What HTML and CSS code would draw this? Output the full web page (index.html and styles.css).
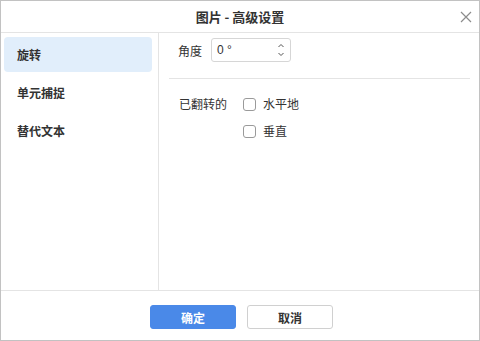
FILE: index.html
```html
<!DOCTYPE html>
<html lang="zh">
<head>
    <meta charset="UTF-8">
    <title>图片 - 高级设置</title>
    <link rel="stylesheet" href="styles.css">
</head>
<body>
    <div class="dialog">
        <div class="header">
            <span class="title">图片 - 高级设置</span>
            <svg class="close" width="12" height="12" viewBox="0 0 12 12">
                <path d="M1 1L11 11M11 1L1 11" stroke="#8c8c8c" stroke-width="1.2" fill="none"/>
            </svg>
        </div>
        <div class="main">
            <ul class="nav">
                <li class="active">旋转</li>
                <li>单元捕捉</li>
                <li>替代文本</li>
            </ul>
            <div class="pane">
                <div class="row angle">
                    <span class="label">角度</span>
                    <div class="spin">
                        <span>0 °</span>
                        <svg width="8" height="16" viewBox="0 0 8 16">
                            <path d="M1.5 5L4 2.5L6.5 5M1.5 11L4 13.5L6.5 11" stroke="#555" stroke-width="1" fill="none"/>
                        </svg>
                    </div>
                </div>
                <div class="sep"></div>
                <div class="flip">
                    <span class="label">已翻转的</span>
                    <div class="checks">
                        <label class="check"><i></i>水平地</label>
                        <label class="check"><i></i>垂直</label>
                    </div>
                </div>
            </div>
        </div>
        <div class="footer">
            <button class="btn primary">确定</button>
            <button class="btn">取消</button>
        </div>
    </div>
</body>
</html>
```

FILE: styles.css
```css
body{
    margin: 0;
    font-family: "Noto Sans CJK SC", "Noto Sans", sans-serif;
    font-size: 12px;
    color: #333;
}
.dialog{
    width: 480px;
    height: 341px;
    box-sizing: border-box;
    border: 1px solid #c2c2c2;
    display: flex;
    flex-direction: column;
    background: #fff;
}
.header{
    height: 31px;
    border-bottom: 1px solid #e4e4e4;
    display: flex;
    align-items: center;
    justify-content: center;
    position: relative;
}
.title{
    font-size: 13px;
    font-weight: bold;
    color: #333;
}
.close{
    position: absolute;
    right: 7px;
    top: 10px;
}
.main{
    flex: 1;
    display: flex;
}
.nav{
    list-style: none;
    margin: 0;
    padding: 4px 0 0 3px;
    width: 154px;
    border-right: 1px solid #e4e4e4;
}
.nav li{
    width: 148px;
    height: 35px;
    line-height: 35px;
    margin-bottom: 3px;
    padding-left: 13px;
    box-sizing: border-box;
    border-radius: 4px;
    font-weight: bold;
}
.nav li.active{
    background: #e1eefb;
}
.pane{
    flex: 1;
    padding: 5px 9px 0 10px;
}
.row{
    display: flex;
    align-items: center;
}
.angle .label{
    padding-left: 9px;
    width: 33px;
}
.spin{
    width: 80px;
    height: 24px;
    box-sizing: border-box;
    border: 1px solid #d6d6d6;
    border-radius: 3px;
    display: flex;
    align-items: center;
    justify-content: space-between;
    padding: 0 5px 0 5px;
}
.spin span{
    font-family: "Liberation Sans", sans-serif;
}
.sep{
    height: 1px;
    background: #e4e4e4;
    margin-top: 16px;
}
.flip{
    display: flex;
    padding: 16px 0 0 10px;
}
.flip .label{
    width: 64px;
    line-height: 18px;
}
.checks{
    display: flex;
    flex-direction: column;
    gap: 9px;
}
.check{
    display: flex;
    align-items: center;
    line-height: 18px;
}
.check i{
    width: 13px;
    height: 13px;
    box-sizing: border-box;
    border: 1px solid #9a9a9a;
    border-radius: 3px;
    margin-right: 7px;
}
.footer{
    height: 50px;
    box-sizing: border-box;
    border-top: 1px solid #e4e4e4;
    display: flex;
    justify-content: center;
    align-items: flex-start;
    gap: 11px;
    padding: 14px 0 0 3px;
}
.btn{
    width: 86px;
    height: 24px;
    border: 1px solid #d0d0d0;
    border-radius: 3px;
    background: #fff;
    font-family: inherit;
    font-size: 12px;
    font-weight: bold;
    color: #333;
    padding: 0;
}
.btn.primary{
    background: #4a89e8;
    border-color: #4a89e8;
    color: #fff;
}
```
